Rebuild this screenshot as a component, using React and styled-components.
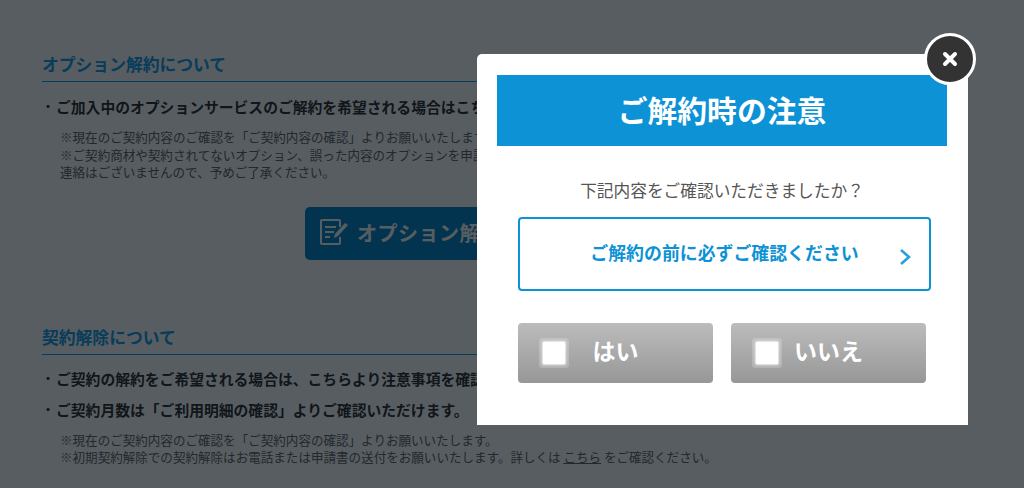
import React from 'react'
import styled, { createGlobalStyle } from 'styled-components'

const GlobalStyle = createGlobalStyle`
html, body {
  margin: 0;
  padding: 0;
  background: #fff;
  overflow: hidden;
}
body {
  font-family: "Noto Sans CJK JP", "Noto Sans", sans-serif;
}
`;
const Page = styled.div`
height: 488px;
box-sizing: border-box;
padding: 53px 64px 0 42px;
overflow: hidden;
`;
const Section = styled.section`
margin-bottom: 66px;
`;
const Heading = styled.h2`
margin: 0;
height: 28px;
line-height: 22px;
font-size: 16.8px;
font-weight: 700;
color: #16a0ea;
border-bottom: 1px solid #16a0ea;
`;
const Lead = styled.p`
margin: ${(p) => p.$top}px 0 0 4px;
padding-left: 10px;
position: relative;
line-height: 20px;
font-size: 14.8px;
font-weight: 700;
color: #333;
white-space: nowrap;
&::before {
  content: "・";
  position: absolute;
  left: -4px;
  font-size: 12px;
}
`;
const Notes = styled.p`
margin: ${(p) => p.$top}px 0 0 18px;
line-height: 17.5px;
font-size: 12.55px;
color: #666;
white-space: nowrap;
a {
  color: #666;
  text-decoration: underline;
}
`;
const ActionRow = styled.div`
display: flex;
justify-content: center;
margin-top: 26px;
`;
const ActionButton = styled.a`
display: flex;
align-items: center;
gap: 8px;
width: 392px;
height: 53px;
box-sizing: border-box;
padding: 0 0 2px 14px;
background: #0a8aca;
border-radius: 5px;
color: #fff;
font-size: 20px;
font-weight: 700;
letter-spacing: 0.5px;
`;
const Overlay = styled.div`
position: fixed;
inset: 0;
background: rgba(0, 8, 13, 0.656);
`;
const Modal = styled.div`
position: absolute;
left: 477px;
top: 54px;
width: 491px;
height: 371px;
box-sizing: border-box;
padding: 21px 21px 0 20px;
background: #fff;
border-radius: 5px 5px 0 0;
`;
const CloseButton = styled.button`
position: absolute;
top: -21px;
right: -8px;
width: 52px;
height: 52px;
box-sizing: border-box;
padding: 0;
display: flex;
align-items: center;
justify-content: center;
background: #333;
border: 3px solid #fff;
border-radius: 50%;
`;
const ModalTitle = styled.h1`
margin: 0;
height: 71px;
line-height: 68px;
text-align: center;
background: #0d92d6;
color: #fff;
font-size: 29.8px;
font-weight: 700;
`;
const Question = styled.p`
margin: 32px 0 0;
line-height: 24px;
text-align: center;
font-size: 16.7px;
color: #555;
`;
const NoticeLink = styled.a`
display: flex;
align-items: center;
justify-content: center;
position: relative;
margin: 15px 16px 0 21px;
height: 74px;
box-sizing: border-box;
padding-bottom: 4px;
border: 2px solid #0d92d6;
border-radius: 4px;
color: #0d92d6;
font-size: 17.9px;
font-weight: 700;
`;
const Chevron = styled.svg`
position: absolute;
right: 18px;
top: 29px;
`;
const Choices = styled.div`
display: flex;
gap: 18px;
margin: 32px 0 0 21px;
`;
const Choice = styled.button`
position: relative;
width: 195px;
height: 60px;
padding: 0 0 6px;
border: 0;
border-radius: 4px;
background: linear-gradient(#bcbcbc, #979797);
color: #fff;
font-family: inherit;
font-size: 23px;
font-weight: 700;
`;
const CheckBox = styled.span`
position: absolute;
left: 25px;
top: 19px;
width: 22px;
height: 22px;
background: #fff;
box-shadow: 0 0 2px 1px rgba(255, 255, 255, 0.8), 0 0 0 4px rgba(255, 255, 255, 0.2);
border-radius: 1px;
`;

const EditIcon = () => (
  <svg width="30" height="30" viewBox="0 0 30 30" fill="none" stroke="#fff" strokeWidth="2">
    <path d="M21 10V4a1 1 0 0 0-1-1H3a1 1 0 0 0-1 1v22a1 1 0 0 0 1 1h17a1 1 0 0 0 1-1v-6" />
    <path d="M6 10h11M6 15h9M6 20h5" />
    <path d="M15 21l1-4L26 6l3 2-10 11z" fill="#fff" stroke="none" />
  </svg>
)

const App = () => {
  return (
    <>
      <GlobalStyle />
      <Page>
        <Section>
          <Heading>オプション解約について</Heading>
          <Lead $top={15}>ご加入中のオプションサービスのご解約を希望される場合はこちら</Lead>
          <Notes $top={11}>
            ※現在のご契約内容のご確認を「ご契約内容の確認」よりお願いいたします。<br />
            ※ご契約商材や契約されてないオプション、誤った内容のオプションを申請された場合、弊社からのご<br />
            連絡はございませんので、予めご了承ください。
          </Notes>
          <ActionRow>
            <ActionButton>
              <EditIcon />
              オプション解約はこちら
            </ActionButton>
          </ActionRow>
        </Section>
        <Section>
          <Heading>契約解除について</Heading>
          <Lead $top={14}>ご契約の解約をご希望される場合は、こちらより注意事項を確認ください。</Lead>
          <Lead $top={11}>ご契約月数は「ご利用明細の確認」よりご確認いただけます。</Lead>
          <Notes $top={11}>
            ※現在のご契約内容のご確認を「ご契約内容の確認」よりお願いいたします。<br />
            ※初期契約解除での契約解除はお電話または申請書の送付をお願いいたします。詳しくは <a>こちら</a> をご確認ください。
          </Notes>
        </Section>
      </Page>
      <Overlay>
        <Modal>
          <CloseButton aria-label="閉じる">
            <svg width="16" height="16" viewBox="0 0 16 16" stroke="#fff" strokeWidth="4" strokeLinecap="round">
              <path d="M3 3l10 10M13 3L3 13" />
            </svg>
          </CloseButton>
          <ModalTitle>ご解約時の注意</ModalTitle>
          <Question>下記内容をご確認いただきましたか？</Question>
          <NoticeLink>
            ご解約の前に必ずご確認ください
            <Chevron width="12" height="18" viewBox="0 0 12 18" fill="none" stroke="#2a9fdc" strokeWidth="2.6">
              <path d="M2 2l8 7-8 7" />
            </Chevron>
          </NoticeLink>
          <Choices>
            <Choice><CheckBox />はい</Choice>
            <Choice><CheckBox />いいえ</Choice>
          </Choices>
        </Modal>
      </Overlay>
    </>
  )
}

export default App
